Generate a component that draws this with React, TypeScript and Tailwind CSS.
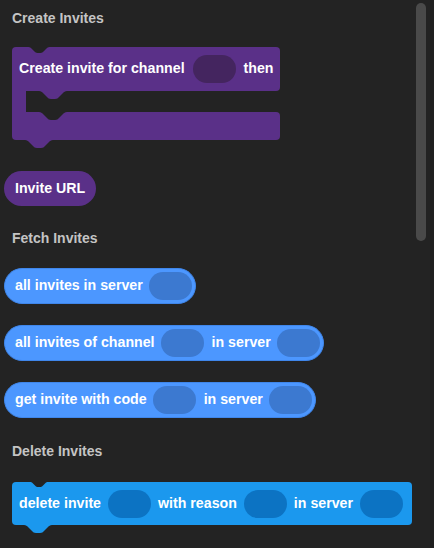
import type { ReactNode } from "react";

const FONT = "font-['Liberation_Sans',Arial,sans-serif]";

function Notch({ fill, className }: { fill: string; className: string }) {
  return (
    <svg
      width="28"
      height="8"
      viewBox="0 0 28 8"
      className={`absolute ${className}`}
    >
      <path
        d="M0,0 c2,0 3,1 4,2 l4,4 c1,1 2,2 4,2 h4 c2,0 3,-1 4,-2 l4,-4 c1,-1 2,-2 4,-2 z"
        fill={fill}
      />
    </svg>
  );
}

function Slot({ className }: { className: string }) {
  return <div className={`h-[28px] w-[43px] shrink-0 rounded-full ${className}`} />;
}

function Heading({ children, className }: { children: ReactNode; className: string }) {
  return (
    <div className={`pl-[12px] text-[14px] font-bold leading-[16px] text-[#c4c4c4] ${className}`}>
      {children}
    </div>
  );
}

function Reporter({ children }: { children: ReactNode }) {
  return (
    <div className="flex h-[36px] w-fit items-center gap-[6px] rounded-full border border-[#3f86ea] bg-[#4c97ff] pl-[10px] pr-[3px] text-[14.2px] font-bold text-white">
      {children}
    </div>
  );
}

const BLUE_SLOT = "bg-[#3c79d0]";

export default function App() {
  return (
    <div className={`relative h-[548px] w-[434px] overflow-hidden bg-[#232323] ${FONT}`}>
      <div className="flex flex-col">
        <Heading className="mt-[10px]">Create Invites</Heading>

        {/* C-shaped statement block */}
        <div className="relative ml-[12px] mt-[21px] w-[268px]">
          <div className="flex h-[44px] items-center gap-[8px] rounded-t-[4px] rounded-br-[4px] bg-[#5a3088] pl-[7px] text-[14.2px] font-bold text-white">
            <span>Create invite for channel</span>
            <Slot className="bg-[#44255f]" />
            <span>then</span>
          </div>
          <div className="flex h-[21px]">
            <div className="w-[14px] bg-[#5a3088]" />
          </div>
          <div className="h-[28px] rounded-b-[4px] rounded-tr-[4px] bg-[#5a3088]" />
          <Notch fill="#232323" className="left-[13px] top-0 h-[6px]" />
          <Notch fill="#5a3088" className="left-[27px] top-[44px]" />
          <Notch fill="#232323" className="left-[27px] top-[65px]" />
          <Notch fill="#5a3088" className="left-[13px] top-[93px]" />
        </div>

        <div className="ml-[4px] mt-[31px] flex h-[35px] w-fit items-center rounded-full bg-[#5a3088] px-[11px] text-[14.2px] font-bold text-white">
          Invite URL
        </div>

        <Heading className="mt-[24px]">Fetch Invites</Heading>

        <div className="ml-[4px] mt-[22px] flex flex-col gap-[21px]">
          <Reporter>
            <span>all invites in server</span>
            <Slot className={BLUE_SLOT} />
          </Reporter>
          <Reporter>
            <span>all invites of channel</span>
            <Slot className={BLUE_SLOT} />
            <span className="ml-[2px]">in server</span>
            <Slot className={BLUE_SLOT} />
          </Reporter>
          <Reporter>
            <span>get invite with code</span>
            <Slot className={BLUE_SLOT} />
            <span className="ml-[2px]">in server</span>
            <Slot className={BLUE_SLOT} />
          </Reporter>
        </div>

        <Heading className="mt-[25px]">Delete Invites</Heading>

        <div className="relative ml-[12px] mt-[23px] flex h-[43px] w-[400px] items-center gap-[7px] rounded-[4px] bg-[#1b98ee] pl-[7px] text-[14.2px] font-bold text-white">
          <span>delete invite</span>
          <Slot className="bg-[#0c73c3]" />
          <span>with reason</span>
          <Slot className="bg-[#0c73c3]" />
          <span>in server</span>
          <Slot className="bg-[#0c73c3]" />
          <Notch fill="#232323" className="left-[13px] top-0 h-[5px]" />
          <Notch fill="#1b98ee" className="left-[12px] top-[43px]" />
        </div>
      </div>

      {/* scrollbar */}
      <div className="absolute right-0 top-0 h-full w-[4px] bg-[#1f1f1f]" />
      <div className="absolute left-[416px] top-[3px] h-[238px] w-[10px] rounded-full bg-[#4a4a4a]" />
    </div>
  );
}
